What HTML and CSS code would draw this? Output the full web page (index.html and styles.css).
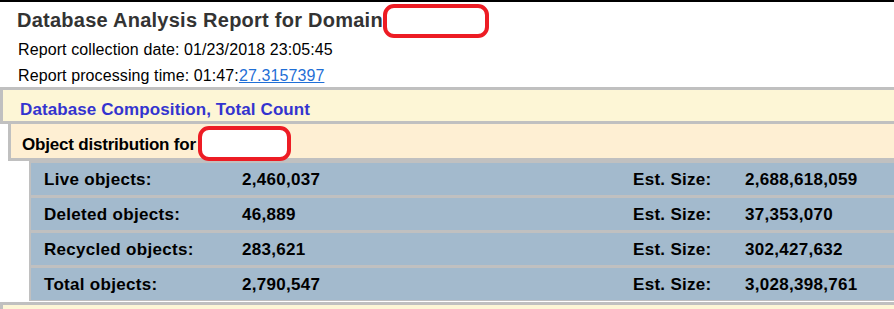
FILE: index.html
```html
<!DOCTYPE html>
<html>
<head>
<meta charset="utf-8">
<link rel="stylesheet" href="styles.css">
</head>
<body>
<div class="page">
  <h1 class="title">Database Analysis Report for Domain</h1>
  <div class="info first">Report collection date: 01/23/2018 23:05:45</div>
  <div class="info second">Report processing time: 01:47:<a href="#" class="link">27.3157397</a></div>

  <div class="section">Database Composition, Total Count</div>
  <div class="subsection">Object distribution for</div>
  <div class="stats">
    <div class="row"><span class="c1">Live objects:</span><span class="c2">2,460,037</span><span class="c3">Est. Size:</span><span class="c4">2,688,618,059</span></div>
    <div class="row"><span class="c1">Deleted objects:</span><span class="c2">46,889</span><span class="c3">Est. Size:</span><span class="c4">37,353,070</span></div>
    <div class="row"><span class="c1">Recycled objects:</span><span class="c2">283,621</span><span class="c3">Est. Size:</span><span class="c4">302,427,632</span></div>
    <div class="row"><span class="c1">Total objects:</span><span class="c2">2,790,547</span><span class="c3">Est. Size:</span><span class="c4">3,028,398,761</span></div>
  </div>
  <div class="section next">&nbsp;</div>

  <span class="redact redact-domain"></span>
  <span class="redact redact-object"></span>
</div>
</body>
</html>
```

FILE: styles.css
```css
html, body {
  margin: 0;
  padding: 0;
  background: #ffffff;
  overflow: hidden;
}
body {
  width: 894px;
  height: 309px;
  font-family: "Liberation Sans", Arial, sans-serif;
}
.page {
  position: relative;
  border-top: 2px solid #000000;
  width: 1100px;
}
.title {
  margin: 6px 0 0 0;
  padding-left: 17px;
  height: 24px;
  line-height: 24px;
  font-size: 20px;
  font-weight: bold;
  letter-spacing: 0.25px;
  color: #333333;
}
.info {
  padding-left: 18px;
  font-size: 16px;
  letter-spacing: 0.1px;
  color: #000000;
}
.info.first {
  margin-top: 4px;
  height: 27px;
  line-height: 27px;
}
.info.second {
  margin-top: 2px;
  height: 22px;
  line-height: 22px;
}
.link {
  color: #1f6fd6;
  text-decoration: underline;
}
.section {
  border: 3px solid #c0c0c0;
  border-right: none;
  background: #fdf6d6;
  color: #3434cf;
  font-size: 17px;
  font-weight: bold;
  letter-spacing: 0.1px;
  line-height: 22px;
  padding: 9px 0 0 17px;
  box-sizing: border-box;
  height: 37px;
}
.subsection {
  margin-left: 8px;
  border: 3px solid #c0c0c0;
  border-top: none;
  border-right: none;
  background: #feefd3;
  color: #000000;
  font-size: 17px;
  font-weight: bold;
  letter-spacing: -0.2px;
  box-sizing: border-box;
  height: 37px;
  line-height: 22px;
  padding: 10px 0 0 11px;
}
.stats {
  margin-left: 29px;
  background: #c0c0c0;
  padding: 2px 0 1px 2px;
  display: flex;
  flex-direction: column;
  gap: 3px;
}
.row {
  display: grid;
  grid-template-columns: 198px 391px 112px 1fr;
  background: #a3bacd;
  height: 32px;
  line-height: 32px;
  font-size: 17px;
  font-weight: bold;
  letter-spacing: 0.3px;
  color: #000000;
}
.row span {
  padding: 1px 0 0 13px;
}
.section.next {
  margin-top: 1px;
}
.redact {
  position: absolute;
  display: block;
  box-sizing: border-box;
  background: #ffffff;
  border: 4px solid #ed1c24;
  border-radius: 11px;
}
.redact-domain {
  left: 383px;
  top: 2px;
  width: 106px;
  height: 34px;
}
.redact-object {
  left: 198px;
  top: 124px;
  width: 93px;
  height: 35px;
}
```
